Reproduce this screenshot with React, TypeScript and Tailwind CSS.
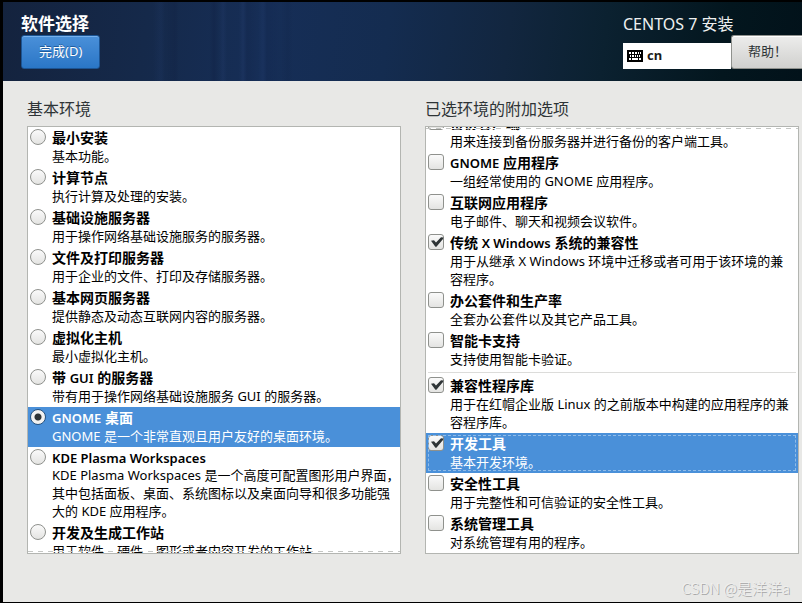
import React, { useState } from 'react'

interface SoftwareOption {
  title: string
  description: string
  separatorAfter?: boolean
}

const environments: SoftwareOption[] = [
  { title: '最小安装', description: '基本功能。' },
  { title: '计算节点', description: '执行计算及处理的安装。' },
  { title: '基础设施服务器', description: '用于操作网络基础设施服务的服务器。' },
  { title: '文件及打印服务器', description: '用于企业的文件、打印及存储服务器。' },
  { title: '基本网页服务器', description: '提供静态及动态互联网内容的服务器。' },
  { title: '虚拟化主机', description: '最小虚拟化主机。' },
  { title: '带 GUI 的服务器', description: '带有用于操作网络基础设施服务 GUI 的服务器。' },
  { title: 'GNOME 桌面', description: 'GNOME 是一个非常直观且用户友好的桌面环境。' },
  {
    title: 'KDE Plasma Workspaces',
    description:
      'KDE Plasma Workspaces 是一个高度可配置图形用户界面，其中包括面板、桌面、系统图标以及桌面向导和很多功能强大的 KDE 应用程序。'
  },
  { title: '开发及生成工作站', description: '用于软件、硬件、图形或者内容开发的工作站。' }
]

const addons: SoftwareOption[] = [
  { title: '备份客户端', description: '用来连接到备份服务器并进行备份的客户端工具。' },
  { title: 'GNOME 应用程序', description: '一组经常使用的 GNOME 应用程序。' },
  { title: '互联网应用程序', description: '电子邮件、聊天和视频会议软件。' },
  {
    title: '传统 X Windows 系统的兼容性',
    description: '用于从继承 X Windows 环境中迁移或者可用于该环境的兼容程序。'
  },
  { title: '办公套件和生产率', description: '全套办公套件以及其它产品工具。' },
  { title: '智能卡支持', description: '支持使用智能卡验证。', separatorAfter: true },
  {
    title: '兼容性程序库',
    description: '用于在红帽企业版 Linux 的之前版本中构建的应用程序的兼容程序库。'
  },
  { title: '开发工具', description: '基本开发环境。' },
  { title: '安全性工具', description: '用于完整性和可信验证的安全性工具。' },
  { title: '系统管理工具', description: '对系统管理有用的程序。' }
]

const OptionText: React.FC<{ option: SoftwareOption }> = ({ option }) => {
  // Titles without Chinese glyphs take a slightly shorter line
  const latinOnly = /^[ -~]+$/.test(option.title)
  // Latin words are set a size smaller than the Chinese around them
  const parts = option.title.split(/([!-~]+(?: [!-~]+)*)/).filter(Boolean)

  return (
    <span className="min-w-0 flex-1">
      <span className={`block text-[14px] font-bold ${latinOnly ? 'leading-[17px]' : 'leading-[18px]'}`}>
        {parts.map((part) =>
          /[!-~]/.test(part) ? (
            <span key={part} className="text-[13px] leading-none font-semibold">
              {part}
            </span>
          ) : (
            part
          )
        )}
      </span>
      <span className="block text-[13px] leading-[18px]">{option.description}</span>
    </span>
  )
}

const KeyboardIcon: React.FC = () => (
  <svg width="16" height="12" viewBox="0 0 16 12" aria-hidden="true" shapeRendering="crispEdges">
    <rect width="16" height="12" rx="1" fill="#000" />
    <path
      d="M2 2h2v2H2zM5 2h2v2H5zM8 2h2v2H8zM11 2h1v2h-1zM13 2h1v2h-1zM3 5h1v2H3zM5 5h2v2H5zM8 5h1v2H8zM10 5h1v2h-1zM12 5h1v2h-1zM2 8h2v2H2zM5 8h6v2H5zM12 8h2v2h-2z"
      fill="#fff"
    />
  </svg>
)

const App: React.FC = () => {
  const [environment, setEnvironment] = useState('GNOME 桌面')
  const [checked, setChecked] = useState<string[]>(['传统 X Windows 系统的兼容性', '兼容性程序库', '开发工具'])
  const [activeAddon, setActiveAddon] = useState('开发工具')

  const toggleAddon = (title: string) => {
    setActiveAddon(title)
    setChecked((prev) => (prev.includes(title) ? prev.filter((t) => t !== title) : [...prev, title]))
  }

  return (
    <div className="flex h-screen flex-col overflow-hidden border-t-2 border-b border-l-3 border-black bg-[#e8e8e6] font-['Noto_Sans','Noto_Sans_CJK_SC',sans-serif] text-black">
      <header className="flex h-[79px] shrink-0 justify-between bg-[linear-gradient(90deg,transparent_150px,rgba(70,110,190,0.06)_158px,transparent_162px,rgba(0,0,30,0.08)_172px,transparent_176px,transparent_206px,rgba(0,0,30,0.10)_211px,transparent_216px,rgba(80,110,190,0.07)_220px,transparent_224px,transparent_236px,rgba(80,110,190,0.08)_240px,rgba(0,0,30,0.06)_244px,transparent_255px,rgba(80,110,190,0.06)_260px,rgba(0,0,30,0.06)_264px,transparent_278px,rgba(0,0,30,0.06)_285px,transparent_290px),linear-gradient(97deg,#14233e_0%,#15294a_18%,#162e57_33%,#142c50_48%,#12263f_63%,#0b2130_75%,#03161e_90%,#02121a_100%)] pl-[18px]">
        <div className="flex flex-col items-start pt-[11px]">
          <h1 className="text-[17px] leading-[22px] font-bold text-white">软件选择</h1>
          <button className="h-[34px] rounded-[3px] border border-[#1c5493] bg-linear-to-b from-[#4a90d9] to-[#2a76c6] px-[17px] text-[13px] text-white shadow-[inset_0_1px_0_#76b0ec] text-shadow-[0_-1px_0_#1f5c9e]">
            完成(D)
          </button>
        </div>
        <div className="flex flex-col pt-[11px]">
          <p className="text-[16px] leading-[22px] text-[#eef0f0]">CENTOS 7 安装</p>
          <div className="flex items-end">
            <div className="flex h-[26px] w-[108px] items-center gap-1 bg-white pl-1">
              <KeyboardIcon />
              <span className="text-[13px] font-bold text-[#1a1a1a]">cn</span>
            </div>
            <button className="h-[34px] rounded-l-[3px] border border-r-0 border-[#8f918d] bg-linear-to-b from-[#ededec] to-[#d0d0ce] pr-[15px] pl-4 text-[13px] text-[#2e3436] shadow-[inset_0_1px_0_#fff]">
              帮助！
            </button>
          </div>
        </div>
      </header>

      <main className="grid min-h-0 flex-1 grid-cols-2 grid-rows-1 gap-6 pt-4 pr-[3px] pl-6">
        <section className="flex min-h-0 flex-col">
          <h2 className="mb-[5px] text-[16px] leading-6 text-[#2e3436]">基本环境</h2>
          <div className="relative min-h-0 flex-1 overflow-hidden border border-[#b3b5b1] bg-white">
            {environments.map((option) => (
              <label
                key={option.title}
                className={`flex items-start gap-[6px] py-[2px] pl-[2px] ${
                  environment === option.title ? 'bg-[#4a90d9] text-white' : ''
                }`}
              >
                <input
                  type="radio"
                  name="environment"
                  checked={environment === option.title}
                  onChange={() => setEnvironment(option.title)}
                  className="h-4 w-4 shrink-0 appearance-none rounded-full border border-[#8f918d] bg-linear-to-b from-[#fafafa] to-[#e4e4e2] checked:border-[#27537f] checked:bg-[radial-gradient(circle,#2e3436_0px,#2e3436_3px,#f2f2f1_4px)]"
                />
                <OptionText option={option} />
              </label>
            ))}
            <div className="absolute inset-x-0 bottom-[1px] h-px bg-[repeating-linear-gradient(90deg,#c4c6c3_0px,#c4c6c3_5px,#fff_5px,#fff_10px)]" />
          </div>
        </section>

        <section className="flex min-h-0 flex-col">
          <h2 className="mb-[5px] text-[16px] leading-6 text-[#2e3436]">已选环境的附加选项</h2>
          {/* List is scrolled to its end */}
          <div className="relative flex min-h-0 flex-1 flex-col justify-end overflow-hidden border border-[#b3b5b1] bg-white">
            {addons.map((option) => (
              <React.Fragment key={option.title}>
                <label
                  className={`flex shrink-0 items-start gap-[6px] py-[2px] pr-2 pl-[2px] ${
                    activeAddon === option.title
                      ? 'bg-[#4a90d9] text-white outline-1 -outline-offset-3 outline-dashed outline-[#8fbbe8]'
                      : ''
                  }`}
                >
                  <span className="grid shrink-0">
                    <input
                      type="checkbox"
                      checked={checked.includes(option.title)}
                      onChange={() => toggleAddon(option.title)}
                      className="peer col-start-1 row-start-1 h-4 w-4 appearance-none rounded-[3px] border border-[#8f918d] bg-linear-to-b from-[#fafafa] to-[#e4e4e2]"
                    />
                    <svg
                      className="pointer-events-none invisible col-start-1 row-start-1 peer-checked:visible"
                      width="16"
                      height="16"
                      viewBox="0 0 16 16"
                      aria-hidden="true"
                    >
                      <path d="M3 6.8 L6 6.2 L8 8.6 L13 3.2 L15.4 3.4 L15 5 L8.4 12.8 L7.4 12.8 Z" fill="#2e3436" />
                    </svg>
                  </span>
                  <OptionText option={option} />
                </label>
                {option.separatorAfter && <hr className="mx-[2px] my-[2px] shrink-0 border-[#dcdcda]" />}
              </React.Fragment>
            ))}
            <div className="absolute inset-x-0 top-[1px] h-px bg-[repeating-linear-gradient(90deg,#c4c6c3_0px,#c4c6c3_5px,#fff_5px,#fff_10px)]" />
          </div>
        </section>
      </main>

      <footer className="flex h-12 shrink-0 items-end justify-end pr-3 pb-[2px]">
        <p className="font-['Noto_Sans_CJK_SC',sans-serif] text-[15px] leading-6 font-light text-[#f0f0ef] text-shadow-[1px_1px_0_#a6a6a6]">
          CSDN @是洋洋a
        </p>
      </footer>
    </div>
  )
}

export default App
